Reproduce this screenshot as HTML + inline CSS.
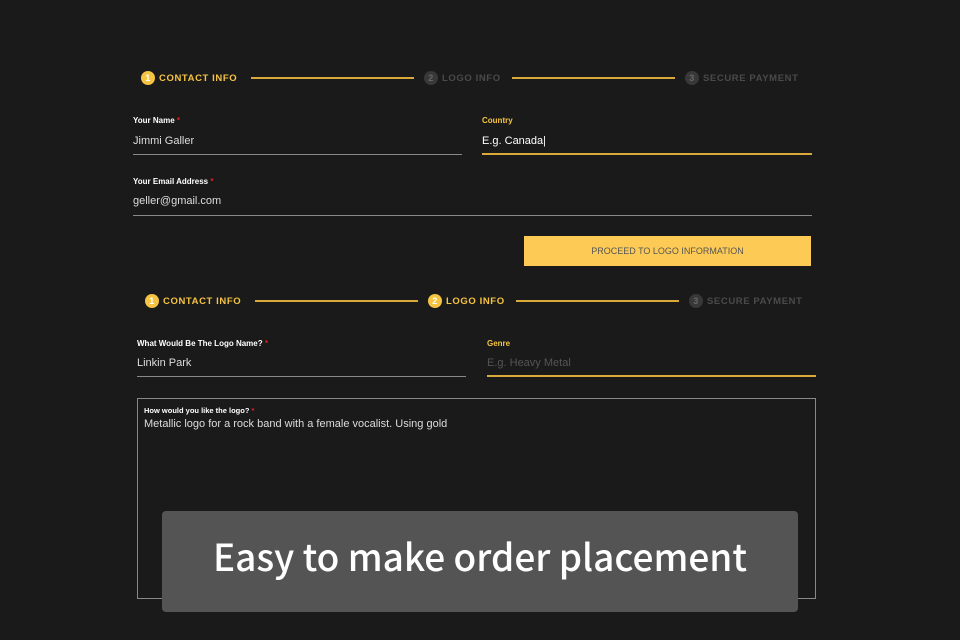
<!DOCTYPE html>
<html><head><meta charset="utf-8"><style>
*{margin:0;padding:0;box-sizing:border-box}
body{width:960px;height:640px;background:#1a1a1a;position:relative;overflow:hidden;font-family:"Liberation Sans",sans-serif;color:#ddd}
.a{position:absolute}
.step{font-size:9.5px;font-weight:bold;letter-spacing:.6px;display:flex;align-items:center;white-space:nowrap}
.c{width:14px;height:14px;border-radius:50%;display:inline-flex;align-items:center;justify-content:center;font-size:9px;margin-right:4px}
.on{color:#f5c443}.on .c{background:#f5c443;color:#fff}
.off{color:#4a4a4a}.off .c{background:#383838;color:#666}
.ln{height:2px;background:#d9a93a}
.lbl{font-size:8px;font-weight:bold;color:#fff}
.lbl i{color:#e02020;font-style:normal}
.y{color:#f5c443}
.val{font-size:11px;color:#ddd}
.ul{height:1px;background:#888}
.uy{height:2px;background:#d9a93a}
</style></head><body>
<div class="a step on" style="left:141px;top:71px"><span class="c">1</span>CONTACT INFO</div>
<div class="a ln" style="left:251px;top:77px;width:163px"></div>
<div class="a step off" style="left:424px;top:71px"><span class="c">2</span>LOGO INFO</div>
<div class="a ln" style="left:512px;top:77px;width:163px"></div>
<div class="a step off" style="left:685px;top:71px"><span class="c">3</span>SECURE PAYMENT</div>

<div class="a lbl" style="left:133px;top:116px">Your Name <i>*</i></div>
<div class="a val" style="left:133px;top:135px">Jimmi Galler</div>
<div class="a ul" style="left:133px;top:154px;width:329px"></div>
<div class="a lbl y" style="left:482px;top:116px">Country</div>
<div class="a val" style="left:482px;top:135px;color:#fff">E.g. Canada|</div>
<div class="a uy" style="left:482px;top:153px;width:330px"></div>

<div class="a lbl" style="left:133px;top:177px">Your Email Address <i>*</i></div>
<div class="a val" style="left:133px;top:195px">geller@gmail.com</div>
<div class="a ul" style="left:133px;top:215px;width:679px"></div>

<div class="a" style="left:524px;top:236px;width:287px;height:30px;background:#fdcb55;color:#555;font-size:9px;display:flex;align-items:center;justify-content:center">PROCEED TO LOGO INFORMATION</div>

<div class="a step on" style="left:145px;top:294px"><span class="c">1</span>CONTACT INFO</div>
<div class="a ln" style="left:255px;top:300px;width:163px"></div>
<div class="a step on" style="left:428px;top:294px"><span class="c">2</span>LOGO INFO</div>
<div class="a ln" style="left:516px;top:300px;width:163px"></div>
<div class="a step off" style="left:689px;top:294px"><span class="c">3</span>SECURE PAYMENT</div>

<div class="a lbl" style="left:137px;top:339px">What Would Be The Logo Name? <i>*</i></div>
<div class="a val" style="left:137px;top:357px">Linkin Park</div>
<div class="a ul" style="left:137px;top:376px;width:329px"></div>
<div class="a lbl y" style="left:487px;top:339px">Genre</div>
<div class="a val" style="left:487px;top:357px;color:#555">E.g. Heavy Metal</div>
<div class="a uy" style="left:487px;top:375px;width:329px"></div>

<div class="a" style="left:137px;top:398px;width:679px;height:201px;border:1px solid #888"></div>
<div class="a lbl" style="left:144px;top:406px;font-size:7.5px">How would you like the logo? <i>*</i></div>
<div class="a val" style="left:144px;top:418px">Metallic logo for a rock band with a female vocalist. Using gold</div>

<div class="a" style="left:162px;top:511px;width:636px;height:101px;background:#545454;border-radius:4px;display:flex;align-items:center;justify-content:center;color:#fff;font-family:'Noto Sans CJK JP','DejaVu Sans',sans-serif;font-size:37px;font-weight:500;padding-bottom:14px">Easy to make order placement</div>
</body></html>
